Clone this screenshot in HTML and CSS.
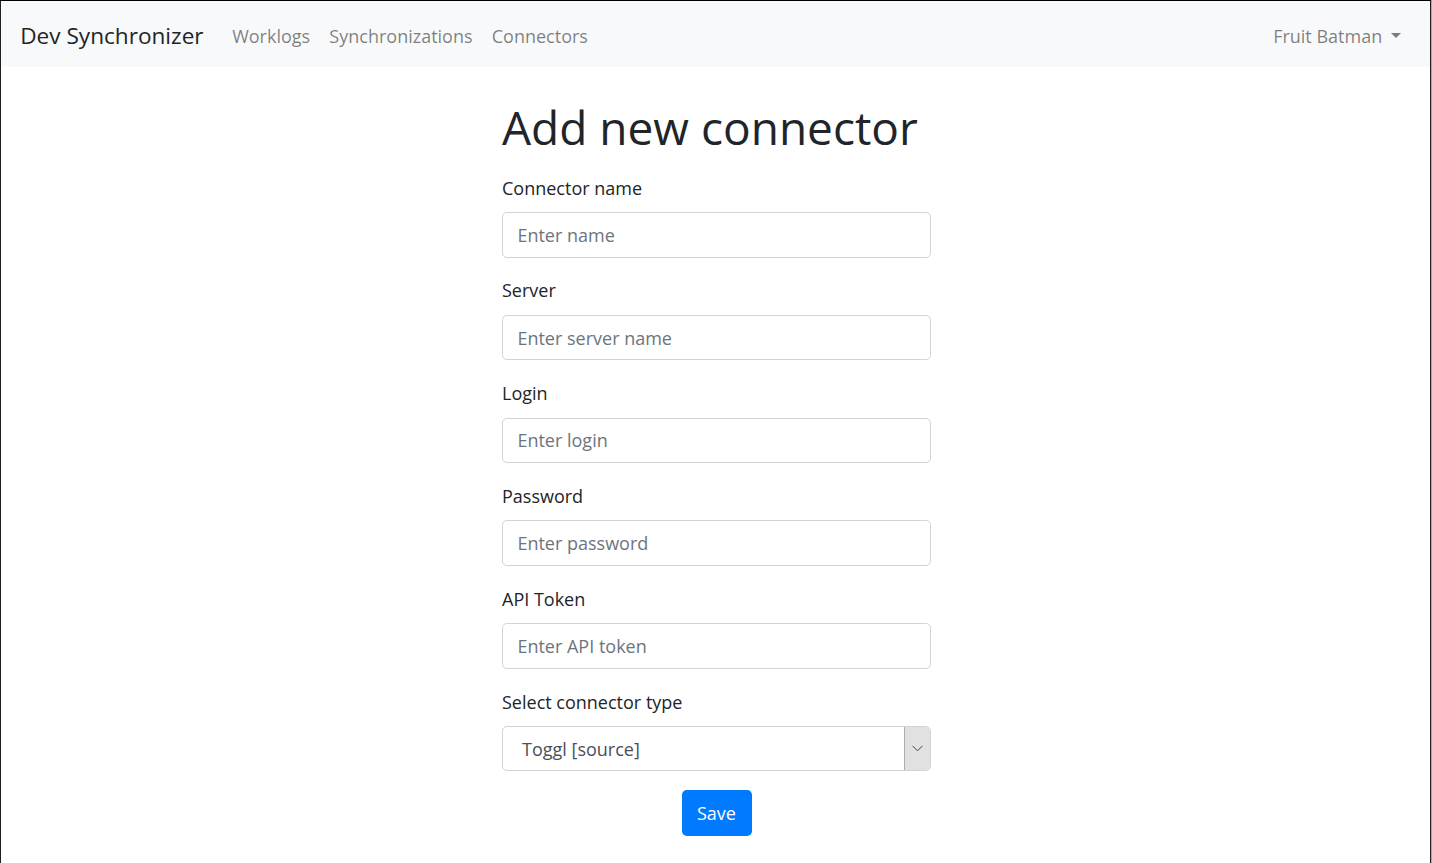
FILE: index.html
```html
<!DOCTYPE html>
<html lang="en">
<head>
<meta charset="utf-8">
<title>Dev Synchronizer</title>
<link rel="stylesheet" href="styles.css">
</head>
<body>
<nav class="navbar">
  <a class="brand" href="#">Dev Synchronizer</a>
  <ul class="nav">
    <li><a class="nav-link" href="#">Worklogs</a></li>
    <li><a class="nav-link" href="#">Synchronizations</a></li>
    <li><a class="nav-link" href="#">Connectors</a></li>
  </ul>
  <div class="user">
    <a class="nav-link dropdown" href="#">Fruit Batman<span class="caret"></span></a>
  </div>
</nav>
<main class="main">
  <form class="form">
    <h1 class="title">Add new connector</h1>
    <div class="group">
      <label class="label" for="name">Connector name</label>
      <input class="control" id="name" type="text" placeholder="Enter name">
    </div>
    <div class="group">
      <label class="label" for="server">Server</label>
      <input class="control" id="server" type="text" placeholder="Enter server name">
    </div>
    <div class="group">
      <label class="label" for="login">Login</label>
      <input class="control" id="login" type="text" placeholder="Enter login">
    </div>
    <div class="group">
      <label class="label" for="password">Password</label>
      <input class="control" id="password" type="password" placeholder="Enter password">
    </div>
    <div class="group">
      <label class="label" for="token">API Token</label>
      <input class="control" id="token" type="text" placeholder="Enter API token">
    </div>
    <div class="group">
      <label class="label" for="type">Select connector type</label>
      <div class="select-wrap">
        <select class="control select" id="type">
          <option>Toggl [source]</option>
        </select>
        <span class="select-btn">
          <svg width="11" height="7" viewBox="0 0 11 7"><path d="M0.5 0.8 L5.5 5.8 L10.5 0.8" fill="none" stroke="#444" stroke-width="1"/></svg>
        </span>
      </div>
    </div>
    <div class="actions">
      <button class="btn" type="button">Save</button>
    </div>
  </form>
</main>
</body>
</html>
```

FILE: styles.css
```css
html {
  background: #f0a30a;
}
body {
  margin: 0 1px 0 0;
  box-sizing: border-box;
  min-height: 100vh;
  background: #fff;
  border-top: 1px solid #000;
  border-left: 1px solid #202020;
  border-right: 1px solid #202020;
  font-family: "Open Sans", "Noto Sans", sans-serif;
  font-size: 18px;
  color: #212529;
}
.navbar {
  display: flex;
  align-items: center;
  box-sizing: border-box;
  height: 66px;
  padding: 3px 19.2px 0;
  background: #f8f9fa;
}
.brand {
  font-size: 22.6px;
  color: #212529;
  text-decoration: none;
  margin-right: 19px;
}
.nav {
  display: flex;
  list-style: none;
  margin: 0;
  padding: 0;
}
.nav-link {
  display: block;
  padding: 0 9.6px;
  color: rgba(0, 0, 0, 0.5);
  text-decoration: none;
  font-size: 18px;
}
.user {
  margin-left: auto;
}
.dropdown {
  display: flex;
  align-items: center;
}
.caret {
  display: inline-block;
  margin-left: 9px;
  width: 0;
  height: 0;
  border-top: 5.5px solid rgba(0, 0, 0, 0.5);
  border-left: 5.5px solid transparent;
  border-right: 5.5px solid transparent;
}
.main {
  display: flex;
  justify-content: center;
  padding-top: 32px;
  padding-left: 2px;
}
.form {
  width: 429px;
}
.title {
  font-size: 46px;
  font-weight: 400;
  line-height: 57.6px;
  margin: 0 0 17px;
  white-space: nowrap;
}
.group {
  margin-bottom: 18.8px;
}
.label {
  display: block;
  line-height: 28.8px;
  margin-bottom: 9.6px;
}
.control {
  display: block;
  box-sizing: border-box;
  width: 100%;
  height: 45.6px;
  padding: 0 14.4px;
  border: 1px solid #ced4da;
  border-radius: 4.8px;
  background: #fff;
  font-family: inherit;
  font-size: 18px;
  color: #495057;
}
.control::placeholder {
  color: #6c757d;
  opacity: 1;
}
.select-wrap {
  position: relative;
}
.select {
  appearance: none;
  -webkit-appearance: none;
  padding-left: 19px;
}
.select-btn {
  position: absolute;
  top: 1px;
  right: 1px;
  bottom: 1px;
  width: 25px;
  display: flex;
  align-items: center;
  justify-content: center;
  background: #e1e1e1;
  border-left: 1px solid #adadad;
  border-radius: 0 3.8px 3.8px 0;
}
.actions {
  display: flex;
  justify-content: center;
}
.btn {
  width: 70px;
  height: 45.6px;
  border: 0;
  border-radius: 4.8px;
  background: #007bff;
  color: #fff;
  font-family: inherit;
  font-size: 18px;
}
```
